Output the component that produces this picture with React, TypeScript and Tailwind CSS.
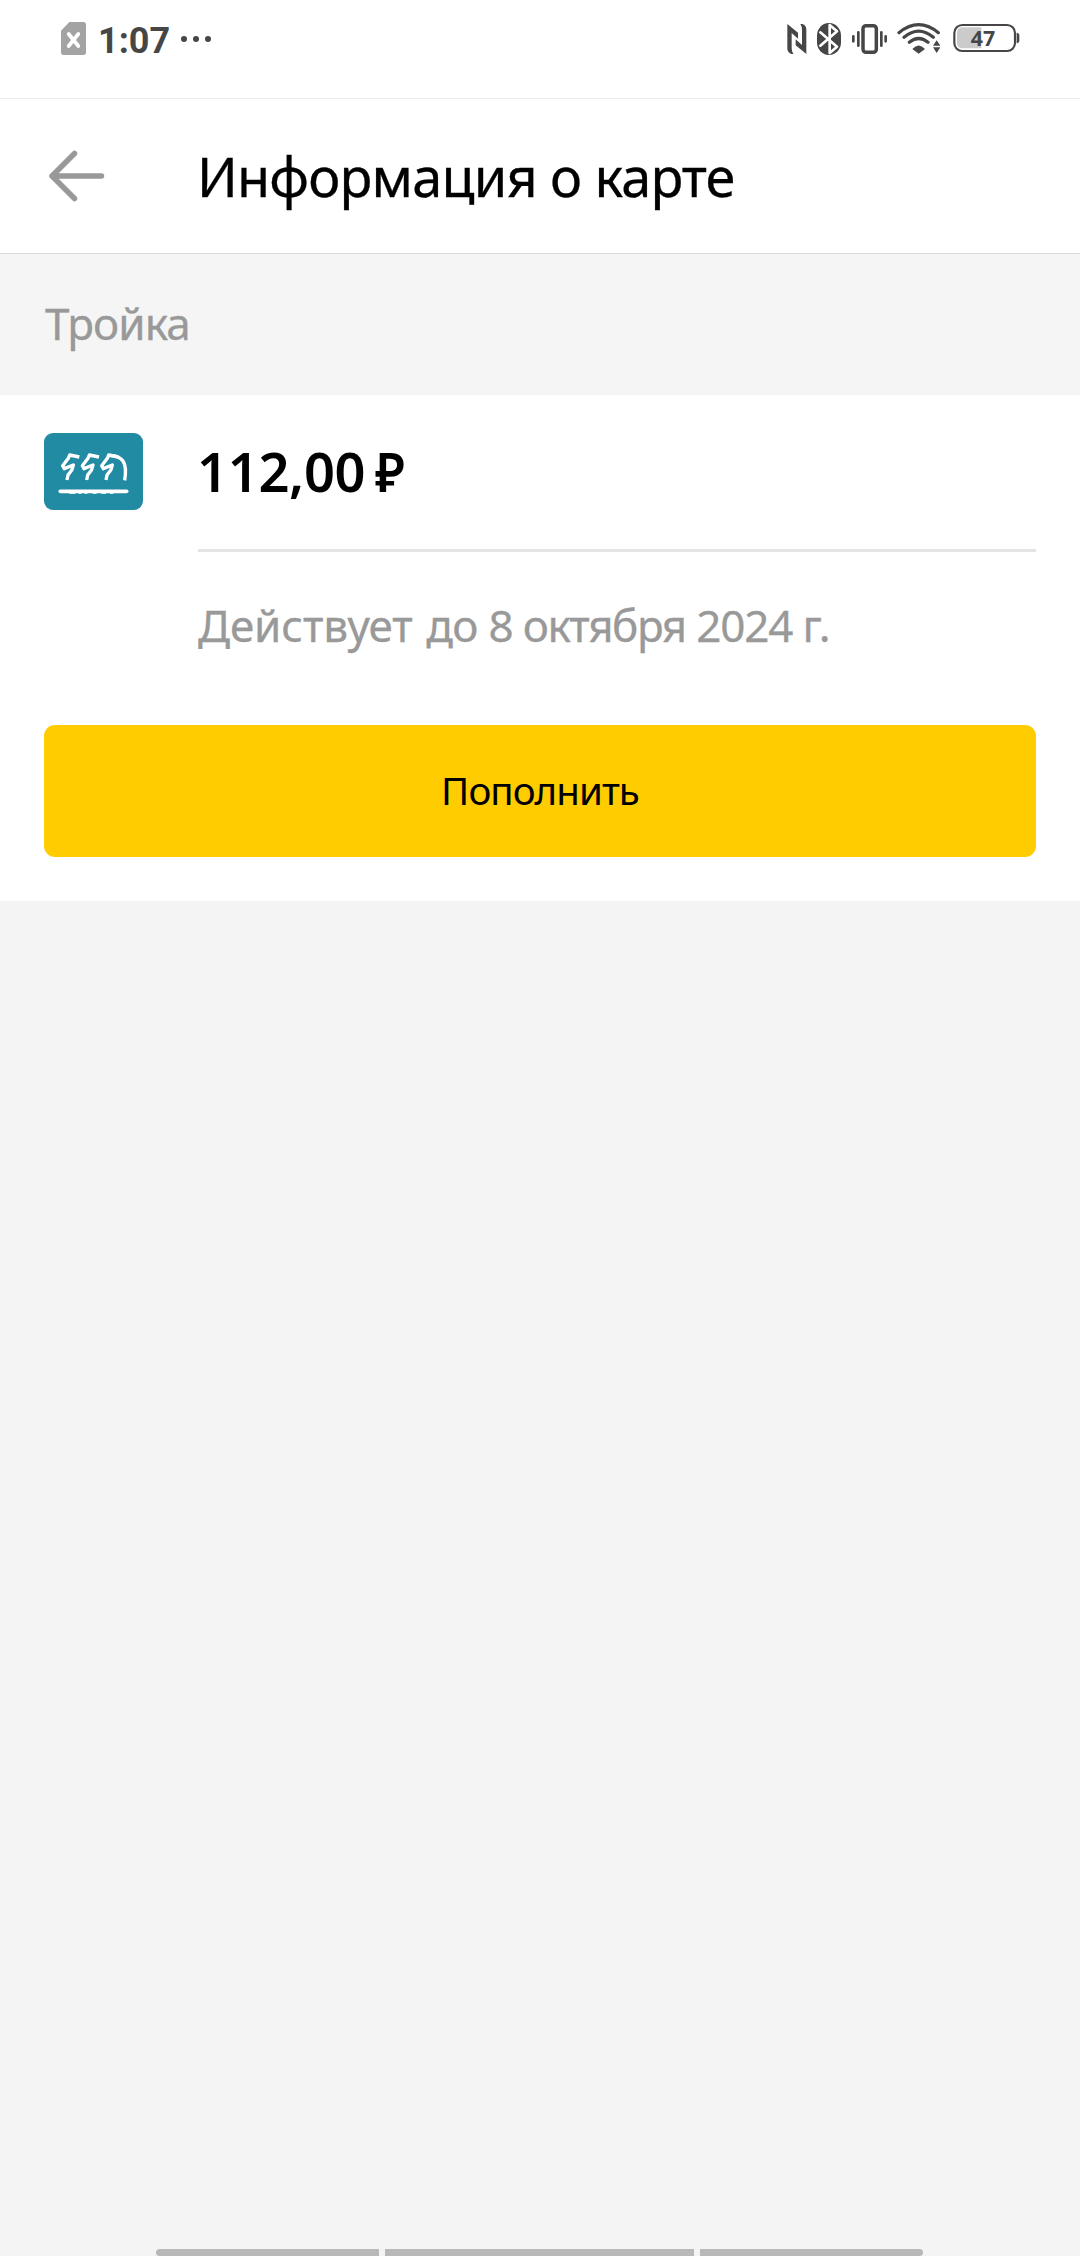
function SimIcon() {
  return (
    <svg className="h-[33px] w-[25px]" viewBox="63 66 75 99">
      <path d="M88 66H130Q138 66 138 74V157Q138 165 130 165H71Q63 165 63 157V92Z" fill="#a3a3a3" />
      <path d="M86 102L115 138M115 102L86 138" stroke="#fff" strokeWidth="11" strokeLinecap="round" />
    </svg>
  );
}

function NfcIcon() {
  const half = "M51 72L83 98V116L64 99V144Q64 155 69 162H63Q51 158 51 145Z";
  return (
    <svg className="h-[34px] w-[20px]" viewBox="50 66 60 102" fill="#464646">
      <path d={half} />
      <path d={half} transform="rotate(180 79.5 117)" />
    </svg>
  );
}

function BluetoothIcon() {
  return (
    <svg className="ml-[10px] h-[34px] w-[24px]" viewBox="141 66 72 102" fill="none">
      <rect x="141" y="69" width="72" height="96" rx="35" ry="38" fill="#464646" />
      <path d="M151 97L201 140L179 159V75L201 94L151 137" stroke="#fff" strokeWidth="8" strokeLinejoin="round" strokeLinecap="round" />
    </svg>
  );
}

function VibrateIcon() {
  return (
    <svg className="ml-[11px] h-[34px] w-[35px]" viewBox="246 66 105 102" fill="none" stroke="#464646">
      <rect x="279" y="77" width="40" height="80" rx="9" strokeWidth="10.500" />
      <path d="M265 97V137M250 109V124M334 97V137M347 109V124" strokeWidth="8" strokeLinecap="round" />
    </svg>
  );
}

function WifiIcon() {
  return (
    <svg className="ml-[10px] h-[34px] w-[44px]" viewBox="382 66 132 102" fill="none">
      <path d="M388 98Q447 50 506 98M403 112Q447 75 491 112M419 127Q447 104 475 127" stroke="#464646" strokeWidth="9.500" strokeLinecap="round" />
      <path d="M428 147Q447 126 466 147L447 161ZM501 121L512 137H490ZM501 159L490 142H512Z" fill="#464646" />
    </svg>
  );
}

function BatteryIcon() {
  return (
    <svg className="ml-[12px] h-[34px] w-[67px]" viewBox="548 66 201 102">
      <rect x="552" y="75" width="182" height="78" rx="24" fill="none" stroke="#464646" strokeWidth="6.5" />
      <path d="M633 82H576Q560 83 560 100V128Q560 144 576 145H633Z" fill="#cbcbcb" />
      <path d="M739 98Q747 99 747 107V121Q747 129 739 130Z" fill="#464646" />
      <text x="638" y="138" textAnchor="middle" fontSize="64" fill="#464646" className="font-['Noto_Sans',sans-serif] font-bold">
        47
      </text>
    </svg>
  );
}

function TroikaLogo() {
  const horse = "M148 111L119 105L115 115L98 137L103 146L130 135L126 149L114 165L111 180";
  return (
    <svg className="h-[77px] w-[99px] rounded-[9px] bg-[#228ba4]" viewBox="42 39 297 231" fill="none" stroke="#fff" strokeWidth="10" strokeLinejoin="round">
      <path d={horse} />
      <path d={horse} transform="translate(59)" />
      <path d={horse} transform="translate(117)" />
      <path d="M240 106Q268 107 279 123Q291 142 284 181" />
      <path d="M91 214H290" strokeWidth="11" strokeLinecap="round" />
      <path d="M118 220H136M146 220H154M164 220H172M188 220H200M214 220H228M240 220H250" strokeWidth="3" />
    </svg>
  );
}

function StatusBar() {
  return (
    <div className="flex h-[99px] items-start border-b border-[#ebebeb] pt-[22px] pr-[60px] pl-[61px]">
      <SimIcon />
      <span className="ml-[12px] pt-px font-['Roboto',sans-serif] text-[36px] leading-[36px] font-bold text-[#464646]">1:07</span>
      <div className="mt-[14px] ml-[11px] flex gap-[6px]">
        <i className="size-[6px] rounded-full bg-[#464646]" />
        <i className="size-[6px] rounded-full bg-[#464646]" />
        <i className="size-[6px] rounded-full bg-[#464646]" />
      </div>
      <div className="ml-auto flex">
        <NfcIcon />
        <BluetoothIcon />
        <VibrateIcon />
        <WifiIcon />
        <BatteryIcon />
      </div>
    </div>
  );
}

export default function App() {
  return (
    <div className="flex h-[2256px] w-[1080px] flex-col bg-[#f4f4f4] font-['Noto_Sans',sans-serif] text-black">
      <div className="bg-white">
        <StatusBar />
        <header className="flex h-[155px] items-center border-b border-[#dcdcdc] pl-[47px] shadow-[0_1px_2px_rgba(0,0,0,0.04)]">
          <svg className="h-[54px] w-[60px]" viewBox="0 0 60 54" fill="none" stroke="#999" strokeWidth="5.500" strokeLinecap="round" strokeLinejoin="round">
            <path d="M54.500 27H5M27.500 4.500L5 27L27.500 49.500" />
          </svg>
          <h1 className="ml-[90px] text-[54px] leading-[74px] tracking-[-0.82px] [-webkit-text-stroke:0.3px_#000]">Информация о карте</h1>
        </header>
      </div>

      <h2 className="flex h-[141px] items-center bg-[#f5f5f5] pb-[3px] pl-[45px] text-[44px] leading-[60px] tracking-[-0.9px] text-[#999] [-webkit-text-stroke:0.3px_#999]">Тройка</h2>

      <main className="h-[506px] bg-white px-[44px] pt-[38px]">
        <div className="flex">
          <TroikaLogo />
          <div className="ml-[55px] flex-1">
            <p className="flex h-[116px] items-start text-[54.2px] leading-[77px] font-semibold tracking-[-0.3px]">
              <span className="-ml-px">112,00</span>
              <span className="ml-[10px] origin-left scale-x-93">₽</span>
            </p>
            <div className="h-[3px] bg-[#e4e4e4]" />
            <p className="mt-[43px] text-[44px] leading-[60px] tracking-[-0.7px] whitespace-nowrap text-[#999] [-webkit-text-stroke:0.3px_#999]">
              <span className="mr-[3px] tracking-[-0.1px]">Действует</span> до 8 <span className="-ml-px tracking-[-1.5px]">октября</span> <span className="tracking-[-1.2px]">2024 г.</span>
            </p>
          </div>
        </div>
        <button className="mt-[70px] flex h-[132px] w-full items-center justify-center rounded-[11px] bg-[#ffcc00] pb-[2px] text-[38.5px] leading-[54px] tracking-[-0.95px]">
          Пополнить
        </button>
      </main>

      <nav className="mt-auto flex h-[7px] justify-center gap-[6px] pr-[2px]">
        <div className="w-[223px] rounded-l-[4px] bg-[#b8b8b8]" />
        <div className="w-[309px] bg-[#b8b8b8]" />
        <div className="w-[223px] rounded-r-[4px] bg-[#b8b8b8]" />
      </nav>
    </div>
  );
}
